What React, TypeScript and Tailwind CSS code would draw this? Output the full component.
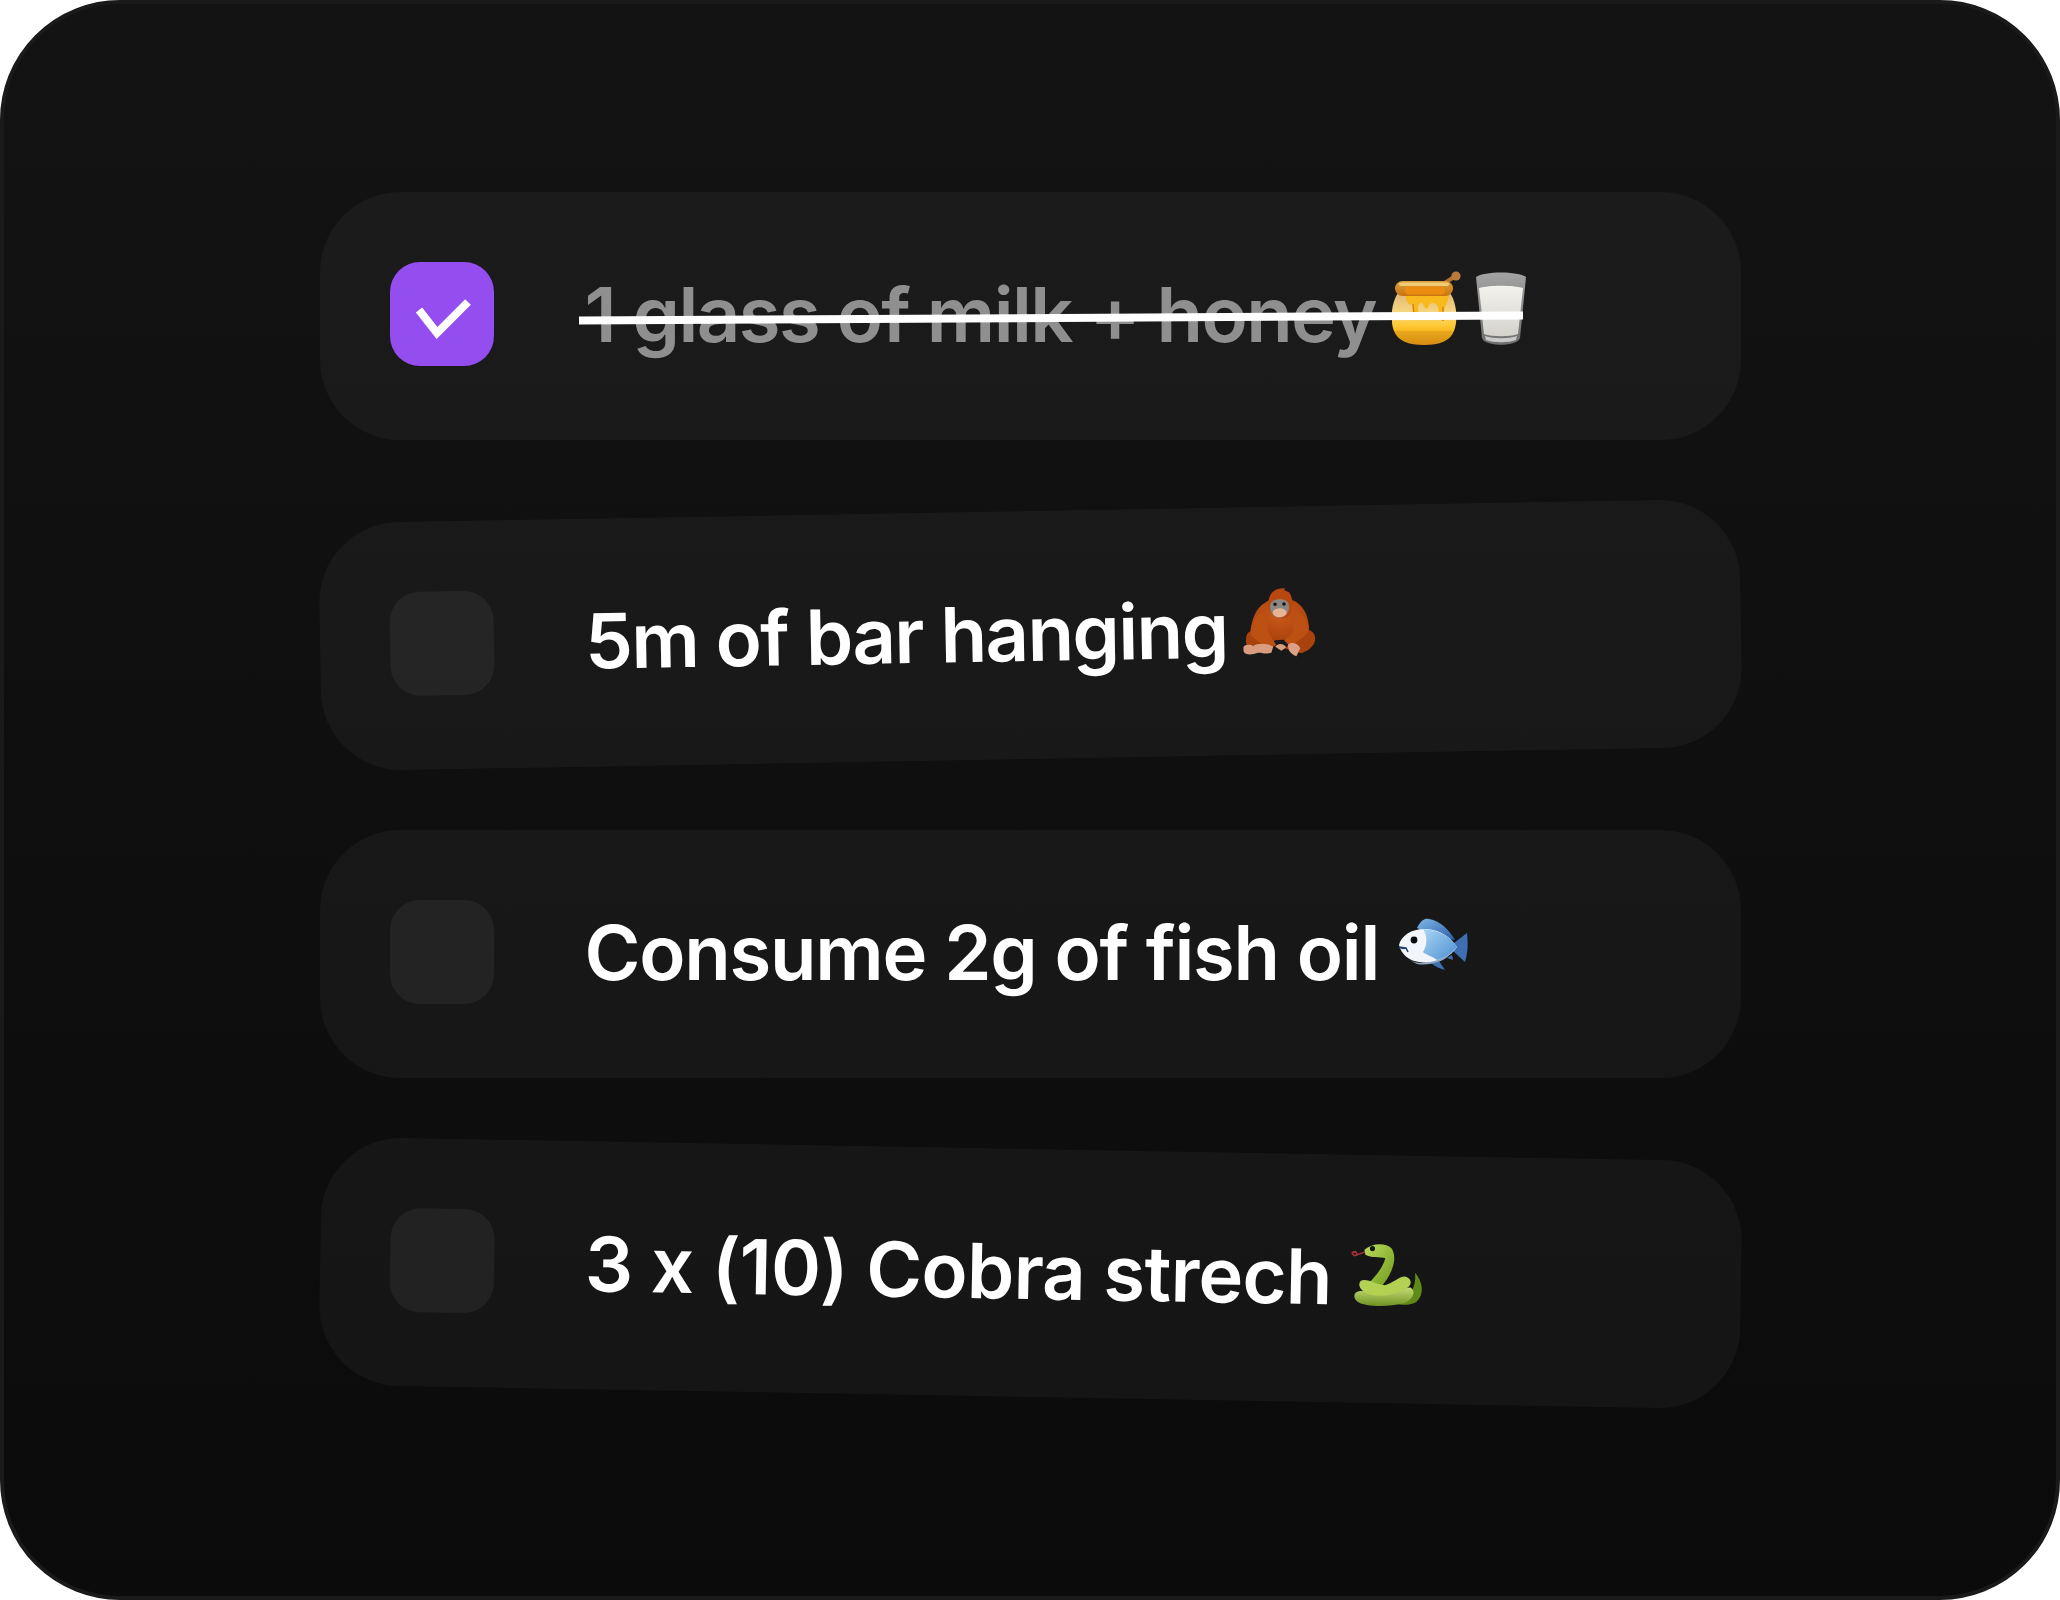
const HoneyIcon = () => (
  <svg width="70" height="75" viewBox="0 0 70 75" className="mb-[12px] shrink-0">
    <defs>
      <linearGradient id="honeyBody" x1="0" y1="0" x2="0" y2="1">
        <stop offset="0" stopColor="#e2b878" />
        <stop offset="0.35" stopColor="#f6d580" />
        <stop offset="0.62" stopColor="#fdcb38" />
        <stop offset="0.72" stopColor="#f8bb22" />
        <stop offset="0.74" stopColor="#e9a71c" />
        <stop offset="1" stopColor="#d68c12" />
      </linearGradient>
      <linearGradient id="honeyRim" x1="0" y1="0" x2="0" y2="1">
        <stop offset="0" stopColor="#d9a13c" />
        <stop offset="1" stopColor="#c9730e" />
      </linearGradient>
    </defs>
    <path d="M48 15 L62 6" stroke="#b5722f" strokeWidth="4" strokeLinecap="round" />
    <circle cx="64" cy="5" r="4.6" fill="#b87b3c" />
    <path d="M6 22 C-1 32 -2 50 2 60 C6 70 16 74 32 74 C48 74 58 70 62 60 C66 50 65 32 58 22 Z" fill="url(#honeyBody)" />
    <path d="M14 22 C13 32 18 35 20 33 C22 30 21 38 23 46 C25 50 27 44 26 36 C27 30 31 31 32 35 C34 39 36 38 37 34 C39 31 44 31 46 36 C47 44 49 48 50 46 C52 40 53 34 56 30 L57 22 Z" fill="#f8b91d" />
    <path d="M21 33 C21 38 22 43 23 47 M51 36 L51 50" stroke="#df7f0e" strokeWidth="1.5" fill="none" />
    <rect x="3" y="10" width="58" height="15" rx="7.5" fill="url(#honeyRim)" />
    <rect x="7" y="11.5" width="50" height="3.5" rx="1.75" fill="#efcb78" />
    <rect x="13" y="15.5" width="40" height="8" rx="4" fill="#ea8c10" />
  </svg>
)

const MilkIcon = () => (
  <svg width="50" height="73" viewBox="0 0 50 73" className="mb-[12px] -ml-[2px] shrink-0">
    <defs>
      <linearGradient id="glassEdge" x1="0" y1="0" x2="0" y2="1">
        <stop offset="0" stopColor="#a3a3a3" />
        <stop offset="1" stopColor="#6f6f6f" />
      </linearGradient>
      <linearGradient id="milkFill" x1="0" y1="0" x2="0" y2="1">
        <stop offset="0" stopColor="#f3f2ee" />
        <stop offset="1" stopColor="#d4d2cb" />
      </linearGradient>
    </defs>
    <path d="M0 5 C8 -1 42 -1 50 5 L44 66 C42 75 8 75 6 66 Z" fill="url(#glassEdge)" />
    <path d="M3 16 C14 13 36 13 47 16 L42 62 C34 65 16 65 8 62 Z" fill="url(#milkFill)" />
    <path d="M9 64 C18 67 32 67 41 64 L40 68 C32 71 18 71 10 68 Z" fill="#c9c9c9" />
  </svg>
)

const OrangutanIcon = () => (
  <svg width="73" height="71" viewBox="0 0 73 71" className="mb-[14px] shrink-0">
    <defs>
      <radialGradient id="apeFur" cx="0.5" cy="0.35" r="0.75">
        <stop offset="0" stopColor="#c9581a" />
        <stop offset="1" stopColor="#a33d09" />
      </radialGradient>
    </defs>
    <path d="M3 52 C3 44 10 42 16 44 L30 60 L12 66 C6 64 2 58 3 52 Z" fill="#a9420c" />
    <path d="M71 48 C75 56 68 64 58 67 L42 62 L58 44 C64 42 69 44 71 48 Z" fill="#a9420c" />
    <path d="M8 46 C8 28 18 15 30 13 L48 13 C62 17 68 34 65 46 L52 56 C44 52 30 52 22 58 Z" fill="url(#apeFur)" />
    <path d="M20 24 C10 32 6 42 8 48 C14 55 22 58 27 62 L33 58 C28 50 24 44 24 38 Z" fill="#bd5013" />
    <path d="M54 24 C64 32 68 40 65 46 C60 52 52 56 47 60 L41 54 C48 48 52 44 50 38 Z" fill="#bd5013" />
    <path d="M26 22 C24 8 32 0 44 2 C40 2 42 4 47 6 C52 14 50 24 46 30 C40 34 30 32 26 22 Z" fill="#b8480f" />
    <path d="M28 17 C30 11 44 11 46 17 C48 24 44 30 37 31 C30 30 26 24 28 17 Z" fill="#8a8683" />
    <ellipse cx="37" cy="26" rx="7" ry="4.5" fill="#e5b596" />
    <circle cx="32.5" cy="17.5" r="1.8" fill="#1c1210" />
    <circle cx="41.5" cy="17.5" r="1.8" fill="#1c1210" />
    <path d="M0 60 C2 57 7 57 10 59 C14 56 24 56 30 60 L28 66 C22 68 18 65 14 66 C8 68 2 68 0 64 Z" fill="#d99c7f" />
    <path d="M32 60 C35 56 41 57 43 61 L38 64 Z" fill="#d99c7f" />
    <path d="M45 58 C49 55 55 57 57 62 L53 70 C48 68 44 64 45 58 Z" fill="#dca084" />
  </svg>
)

const FishIcon = () => (
  <svg width="69" height="53" viewBox="0 0 69 53" className="mb-[15px] shrink-0">
    <defs>
      <linearGradient id="fishBack" x1="0" y1="0" x2="1" y2="1">
        <stop offset="0" stopColor="#7fb7e6" />
        <stop offset="1" stopColor="#2a5ea8" />
      </linearGradient>
      <linearGradient id="fishSide" x1="0" y1="0" x2="1" y2="1">
        <stop offset="0" stopColor="#a8d6f5" />
        <stop offset="1" stopColor="#4d8ed0" />
      </linearGradient>
    </defs>
    <path d="M18 10 C22 2 26 0 30 1 C42 3 50 12 56 22 L40 20 Z" fill="url(#fishBack)" />
    <path d="M55 25 L68 15 C69 26 69 34 66 44 L54 33 Z" fill="#3f6fb3" />
    <path d="M32 44 L40 43 L46 52 C40 50 34 48 32 44 Z M48 40 L53 37 L54 42 Z" fill="#3d70b5" />
    <path d="M0 27 C2 17 14 10 28 11 C42 12 52 20 58 29 C50 41 34 47 20 44 C10 43 2 36 0 27 Z" fill="#f2f6fb" />
    <path d="M24 11 C42 12 52 20 58 29 C52 36 46 40 38 42 C33 38 25 36 24 34 C29 26 28 17 24 11 Z" fill="url(#fishSide)" />
    <path d="M10 42 C20 47 36 46 52 35 C46 44 30 48 18 46 Z" fill="#8fa7c4" />
    <circle cx="15" cy="22" r="3.4" fill="#0c0c10" />
    <path d="M0 29 L7 30 L9 34 M0 29 C2 30 4 31 7 30" stroke="#24456f" strokeWidth="1.6" fill="none" />
  </svg>
)

const SnakeIcon = () => (
  <svg width="74" height="64" viewBox="0 0 74 64" className="mb-[4px] shrink-0">
    <defs>
      <linearGradient id="snakeSkin" x1="0" y1="0" x2="1" y2="1">
        <stop offset="0" stopColor="#bcdc5a" />
        <stop offset="1" stopColor="#6f9a1c" />
      </linearGradient>
      <linearGradient id="snakeCoil" x1="0" y1="0" x2="0" y2="1">
        <stop offset="0" stopColor="#c6dd75" />
        <stop offset="1" stopColor="#6f9222" />
      </linearGradient>
    </defs>
    <path d="M0 10 L4 9 L6 12 L14 9 M0 10 L3 13 L6 12" stroke="#b2323a" strokeWidth="1.5" fill="none" />
    <path d="M64 29 C72 38 74 50 66 58 C60 62 50 62 44 60 C54 56 66 50 64 29 Z" fill="#5f8a18" />
    <path d="M13 7 C20 0 34 -1 40 5 C46 14 42 26 36 36 L31 43 L18 40 C24 34 32 24 34 15 C28 14 20 15 14 12 Z" fill="url(#snakeSkin)" />
    <circle cx="21" cy="5.6" r="2.6" fill="#15150f" />
    <path d="M5 50 C10 46 22 50 32 50 C44 50 56 43 60 44 C66 48 62 57 52 60 C38 64 14 64 7 59 C3 56 3 52 5 50 Z" fill="url(#snakeCoil)" />
    <path d="M10 38 C16 35 26 42 34 42 C42 40 48 33 54 33 C60 34 62 40 57 44 C48 51 30 55 18 51 C10 49 6 42 10 38 Z" fill="#b3d152" />
  </svg>
)

const CheckIcon = () => (
  <svg width="104" height="104" viewBox="0 0 104 104">
    <path d="M29 48 L47 71 L78 40" fill="none" stroke="#ffffff" strokeWidth="8" />
  </svg>
)

function TodoRow({ label, done, className, textClass, children }: { label: string; done?: boolean; className: string; textClass: string; children: React.ReactNode }) {
  return (
    <div className={`relative flex h-[248px] w-[1421px] shrink-0 items-center rounded-[80px] bg-white/[0.04] pb-[4px] pl-[70px] ${className}`}>
      <div className={`flex h-[104px] w-[104px] shrink-0 items-center justify-center rounded-[30px] ${done ? 'bg-[#944ef0]' : 'bg-white/[0.05]'}`}>
        {done && <CheckIcon />}
      </div>
      <div className="ml-[91px] flex items-center">
        <span className={`text-[76px] leading-none font-semibold whitespace-nowrap ${textClass}`}>{label}</span>
        {children}
      </div>
      {done && <div className="absolute top-[122px] left-[259px] h-[8px] w-[944px] -rotate-[0.3deg] bg-white" />}
    </div>
  )
}

export default function App() {
  return (
    <div className="h-[1600px] w-[2060px] bg-white font-['Inter',sans-serif]">
      <div className="flex h-full w-full flex-col items-center gap-[71px] rounded-[120px] border-4 border-[#1a1a1a] bg-gradient-to-b from-[#131313] to-[#0b0b0b] pt-[188px]">
        <TodoRow label="1 glass of milk + honey" done className="" textClass="mr-[16px] tracking-[-1.6px] text-[#8f8f8f]">
          <HoneyIcon />
          <span className="w-[16px]" />
          <MilkIcon />
        </TodoRow>
        <TodoRow label="5m of bar hanging" className="-rotate-[1deg]" textClass="mr-[16px] tracking-[-1.6px] text-white">
          <OrangutanIcon />
        </TodoRow>
        <TodoRow label="Consume 2g of fish oil" className="" textClass="mr-[20px] tracking-[-1.24px] text-white">
          <FishIcon />
        </TodoRow>
        <TodoRow label="3 x (10) Cobra strech" className="rotate-[1deg]" textClass="mr-[19px] tracking-[-0.76px] text-white">
          <SnakeIcon />
        </TodoRow>
      </div>
    </div>
  )
}
